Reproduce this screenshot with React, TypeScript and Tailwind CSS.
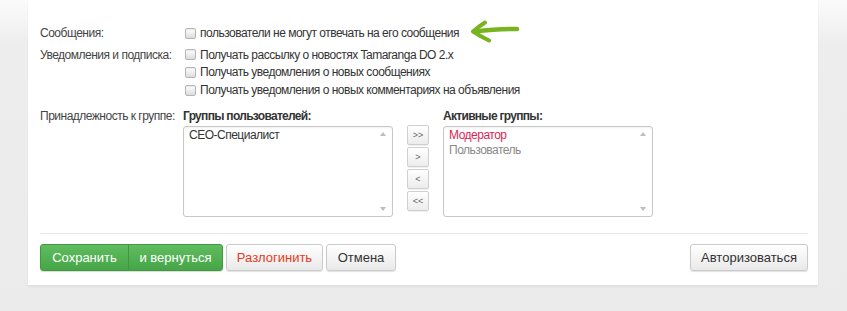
import React from "react";

const font = { fontFamily: '"Liberation Sans", Arial, sans-serif' };

function Check({ label }: { label: string }) {
  return (
    <label className="flex items-center h-full whitespace-nowrap">
      <span className="ml-[2px] mr-[4px] w-[11px] h-[11px] rounded-[2px] border border-[#b5b5b5] bg-[linear-gradient(#ffffff,#dcdcdc)] shadow-[inset_0_1px_1px_rgba(0,0,0,0.08)]" />
      <span className="text-[12px] tracking-[-0.5px] text-[#333]">{label}</span>
    </label>
  );
}

function Arrow() {
  return (
    <svg width="52" height="24" viewBox="0 0 52 24" className="ml-[10px] -mt-[3px]">
      <g fill="none" stroke="#78b420" strokeLinecap="round" strokeLinejoin="round">
        <path d="M48 9 Q30 8.5 5 11.5" strokeWidth="4.5" />
        <path d="M16 2.5 Q9 7 4 11.5 Q11 16 20 20.5" strokeWidth="4" />
      </g>
    </svg>
  );
}

function ListBox({ items }: { items: { text: string; color: string }[] }) {
  return (
    <div className="relative w-[210px] h-[91px] rounded-[3px] border border-[#c8c8c8] bg-white shadow-[inset_0_1px_2px_rgba(0,0,0,0.06)] pl-[5px] pt-[1px]">
      {items.map((it) => (
        <div key={it.text} className="text-[12px] tracking-[-0.5px] leading-[15px]" style={{ color: it.color }}>
          {it.text}
        </div>
      ))}
      <span className="absolute right-[6px] top-[5px] w-0 h-0 border-l-[3px] border-r-[3px] border-b-[4px] border-l-transparent border-r-transparent border-b-[#bdbdbd]" />
      <span className="absolute right-[6px] bottom-[5px] w-0 h-0 border-l-[3px] border-r-[3px] border-t-[4px] border-l-transparent border-r-transparent border-t-[#bdbdbd]" />
    </div>
  );
}

function SmallBtn({ t }: { t: string }) {
  return (
    <button className="w-[22px] h-[20px] rounded-[2px] border border-[#cfcfcf] bg-[linear-gradient(#ffffff,#ececec)] shadow-[0_1px_0_rgba(0,0,0,0.06)] text-[9px] text-[#666] leading-none flex items-center justify-center">
      {t}
    </button>
  );
}

const grayBtn =
  "h-[27px] rounded-[3px] border border-[#cacaca] bg-[linear-gradient(#ffffff,#e9e9e9)] shadow-[0_1px_1px_rgba(0,0,0,0.12)] text-[13px] flex items-center justify-center";

const label = "w-[143px] shrink-0 whitespace-nowrap text-[12px] tracking-[-0.5px] text-[#444]";

export default function App() {
  return (
    <div
      className="w-[847px] h-[311px] overflow-hidden bg-[linear-gradient(#fbfbfb_0px,#ededed_45px,#ebebeb_100%)]"
      style={font}
    >
      <div className="ml-[28px] w-[790px] h-[286px] bg-white border-b border-[#dedede] shadow-[0_1px_2px_rgba(0,0,0,0.05)] pl-[12px] pr-[10px] pt-[25px] flex flex-col">
        <div className="flex h-[16px]">
          <div className={`${label} flex items-center`}>Сообщения:</div>
          <div className="flex items-center">
            <Check label="пользователи не могут отвечать на его сообщения" />
            <Arrow />
          </div>
        </div>

        <div className="flex mt-[5px]">
          <div className={`${label} h-[17px] flex items-center`}>Уведомления и подписка:</div>
          <div className="flex flex-col">
            <div className="h-[17px]"><Check label="Получать рассылку о новостях Tamaranga DO 2.x" /></div>
            <div className="h-[18px]"><Check label="Получать уведомления о новых сообщениях" /></div>
            <div className="h-[18px]"><Check label="Получать уведомления о новых комментариях на объявления" /></div>
          </div>
        </div>

        <div className="flex mt-[10px]">
          <div className={`${label} leading-[14px]`}>Принадлежность к группе:</div>
          <div className="flex">
            <div className="flex flex-col">
              <div className="text-[12px] font-bold tracking-[-0.7px] text-[#333] leading-[14px] whitespace-nowrap">Группы пользователей:</div>
              <div className="mt-[3px]">
                <ListBox items={[{ text: "СЕО-Специалист", color: "#333" }]} />
              </div>
            </div>
            <div className="flex flex-col gap-[2px] mt-[16px] mx-[14px]">
              <SmallBtn t=">>" />
              <SmallBtn t=">" />
              <SmallBtn t="<" />
              <SmallBtn t="<<" />
            </div>
            <div className="flex flex-col">
              <div className="text-[12px] font-bold tracking-[-0.7px] text-[#333] leading-[14px] whitespace-nowrap">Активные группы:</div>
              <div className="mt-[3px]">
                <ListBox
                  items={[
                    { text: "Модератор", color: "#dc1f55" },
                    { text: "Пользователь", color: "#8a8a8a" },
                  ]}
                />
              </div>
            </div>
          </div>
        </div>

        <div className="mt-[16px] h-px bg-[#e6e6e6]" />

        <div className="mt-[10px] flex items-center">
          <div className="flex h-[27px] rounded-[3px] border border-[#3f9a3f] bg-[linear-gradient(#5fbd5f,#46a546)] shadow-[0_1px_1px_rgba(0,0,0,0.15)] text-white text-[13px] overflow-hidden">
            <button className="w-[87px] flex items-center justify-center">Сохранить</button>
            <div className="w-px bg-[#3f983f]" />
            <button className="w-[93px] flex items-center justify-center">и вернуться</button>
          </div>
          <button className={`${grayBtn} ml-[3px] w-[97px] text-[#e53b1d]`}>Разлогинить</button>
          <button className={`${grayBtn} ml-[3px] w-[70px] text-[#333]`}>Отмена</button>
          <div className="flex-1" />
          <button className={`${grayBtn} w-[118px] text-[#333]`}>Авторизоваться</button>
        </div>
      </div>
    </div>
  );
}
